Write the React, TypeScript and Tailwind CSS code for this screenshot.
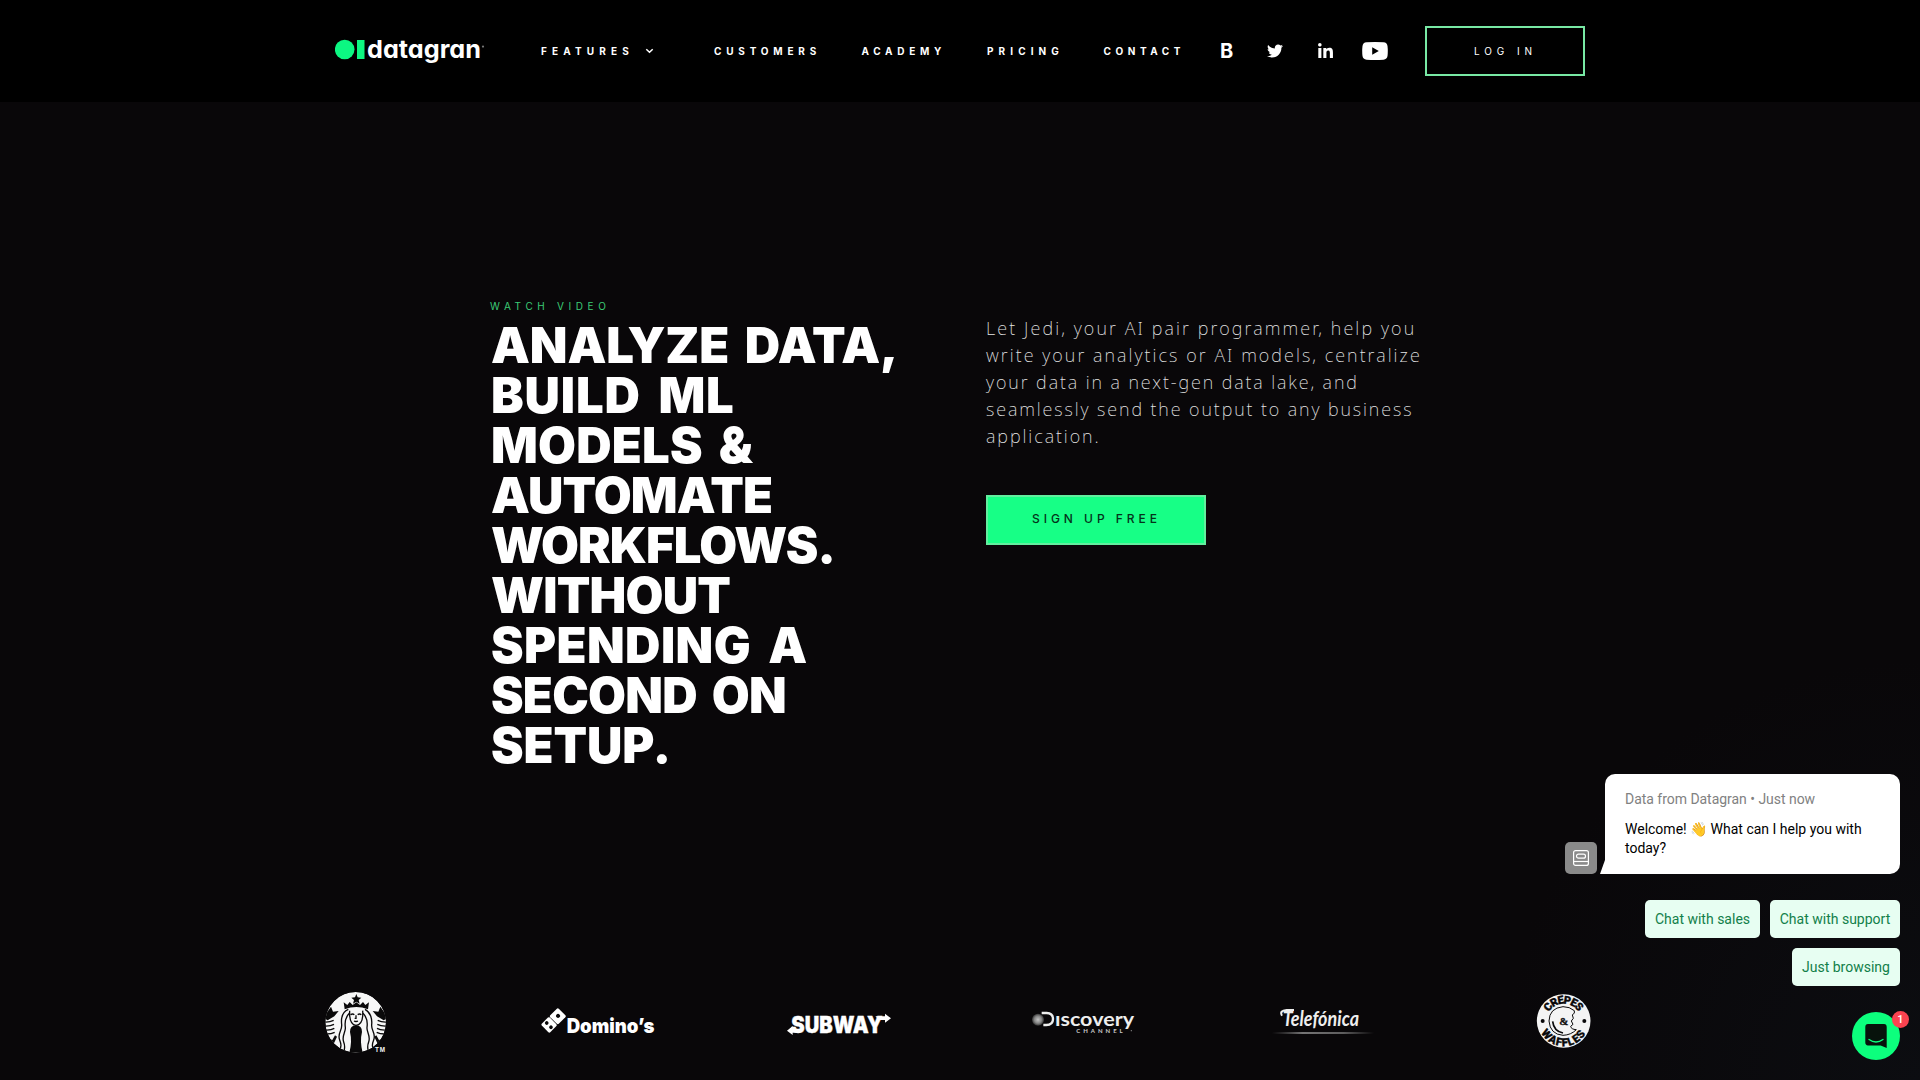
import React from 'react';
import { FaTwitter, FaLinkedinIn } from 'react-icons/fa';

function DatagranLogo() {
  return (
    <svg className="h-10 w-[150px] shrink-0" viewBox="0 -5 150 40">
      <circle cx="9.7" cy="13.5" r="9.8" fill="#0cf782" />
      <rect x="22" y="4" width="7.5" height="19" fill="#0cf782" />
      <text
        x="32"
        y="22.3"
        textLength="114"
        lengthAdjust="spacingAndGlyphs"
        className="fill-white font-['Inter',sans-serif] text-[24.5px] font-bold [font-feature-settings:'cv11','ss03']"
      >
        datagran
      </text>
      <circle cx="148" cy="10.6" r="1.1" fill="#777" />
    </svg>
  );
}

function Header() {
  return (
    <header className="flex h-[102px] items-center bg-black pl-[335px] font-['Inter',sans-serif] text-[10px] font-bold whitespace-nowrap text-white">
      <DatagranLogo />
      <nav className="flex items-center">
        <a className="ml-14 w-[104px] tracking-[5.16px]">FEATURES</a>
        <svg className="h-[9px] w-[9px]" viewBox="0 0 9 9" fill="none" stroke="white" strokeWidth="1.5">
          <path d="M1.3 2.2 4.5 5.3 7.7 2.2" />
        </svg>
        <a className="ml-[60px] w-[147.500px] tracking-[4.8px]">CUSTOMERS</a>
        <a className="w-[125.500px] tracking-[4.7px]">ACADEMY</a>
        <a className="w-[116.500px] tracking-[5.1px]">PRICING</a>
        <a className="w-[116.500px] tracking-[4.56px]">CONTACT</a>
      </nav>
      <span className="w-[14px] text-[20px] leading-5 font-bold">B</span>
      <FaTwitter className="ml-[33px] h-4 w-4" />
      <FaLinkedinIn className="ml-[34px] h-[17px] w-[17px]" />
      <svg className="ml-7 h-[18px] w-[26px]" viewBox="0 0 26 18">
        <path
          fill="white"
          fillRule="evenodd"
          d="M4.5.3Q13-.3 21.500.3 25 .6 25.500 4 26.100 9 25.500 14 25 17.400 21.500 17.700 13 18.300 4.500 17.700 1 17.400.5 14-.1 9 .5 4 1 .6 4.500.3ZM10.200 5.300V12.700L16.800 9Z"
        />
      </svg>
      <a className="ml-[37px] flex h-[50px] w-[160px] items-center justify-center border-2 border-[#78e8a4] pt-px pl-[1px] font-normal tracking-[4.94px]">
        LOG IN
      </a>
    </header>
  );
}

function Hero() {
  return (
    <main className="flex h-[878px] pl-[490px]">
      <section className="w-[496px] pt-[197px] font-['Inter',sans-serif]">
        <p className="h-[22px] text-[10px] leading-[15px] tracking-[4.64px] text-[#3ccb76]">WATCH VIDEO</p>
        <h1 className="pl-[1px] text-[49px] leading-[50px] font-black whitespace-nowrap text-white">
          <span className="block tracking-[-0.1px] [word-spacing:6px]">ANALYZE DATA,</span>
          <span className="block tracking-[0.86px] [word-spacing:7px]">BUILD ML</span>
          <span className="block tracking-[0.2px] [word-spacing:6px]">MODELS &amp;</span>
          <span className="block tracking-[-0.9px]">AUTOMATE</span>
          <span className="block tracking-[-0.9px]">WORKFLOWS.</span>
          <span className="block tracking-[-0.8px]">WITHOUT</span>
          <span className="block tracking-[0.4px] [word-spacing:7px]">SPENDING A</span>
          <span className="block tracking-[-0.76px] [word-spacing:6px]">SECOND ON</span>
          <span className="block tracking-[-0.1px]">SETUP.</span>
        </h1>
      </section>
      <section className="pt-[213px]">
        <p className="font-['Noto_Sans',sans-serif] text-[18px] leading-[27px] font-extralight whitespace-nowrap text-[#e6e6e6]">
          <span className="block tracking-[2.12px]">Let Jedi, your AI pair programmer, help you</span>
          <span className="block tracking-[2.06px]">write your analytics or AI models, centralize</span>
          <span className="block tracking-[1.92px]">your data in a next-gen data lake, and</span>
          <span className="block tracking-[1.91px]">seamlessly send the output to any business</span>
          <span className="block tracking-[1.95px]">application.</span>
        </p>
        <a className="mt-[45px] flex h-[50px] w-[220px] items-center border-2 border-[#62ee9e] bg-[#17ff86] pb-[2px] pl-[44px] font-['Inter',sans-serif] text-[12px] font-medium tracking-[3.96px] whitespace-nowrap text-[#04331a]">
          SIGN UP FREE
        </a>
      </section>
    </main>
  );
}

function Starbucks() {
  return (
    <svg className="h-20 w-20" viewBox="0 0 240 240" fill="#f7f7f7">
      <clipPath id="siren">
        <circle cx="122" cy="127" r="91" />
      </clipPath>
      <g clipPath="url(#siren)">
        <circle cx="122" cy="127" r="91" />
        <g fill="#0a090a">
          <path d="m124 42 4 10 11 1-8 7 3 11-10-6-10 6 3-11-8-7 11-1Z" />
          <path d="m86 67 11 8 7-9 9 9 11-8 11 8 9-9 7 9 11-8-3 21q-35-14-70 0Z" />
          <path d="m33 101 15-21 6 15 17-2-13 16-20 12-10-6Zm178 0-15-21-6 15-17-2 13 16 20 12 10-6Z" />
          <path d="M123 136q18 0 18 20-7 28 2 62h-40q9-34 2-62 0-20 18-20Z" />
          <path d="M30 172l22 8 8-14 6 4-14 30-24-12Zm184 0-22 8-8-14-6 4 14 30 24-12Z" />
        </g>
        <g stroke="#0a090a" strokeWidth="4" fill="none">
          <path d="M28 126q16 1 28-5M28 138q18 1 29-5M30 150q18 1 28-5M34 162q16 0 25-5M216 126q-16 1-28-5M216 138q-18 1-29-5M214 150q-18 1-28-5M210 162q-16 0-25-5" />
          <path
            d="M100 88c-20 8-22 28-20 46s-14 26-6 46 2 22-4 42M103 100c-14 14-14 28-12 42s-12 26-5 44 2 20-2 36M150 88c16 8 22 28 20 46s14 26 6 46-2 22 4 42M144 100c14 14 14 28 12 42s12 26 5 44-2 20 2 36"
            strokeWidth="4"
          />
          <path
            d="M104 92q-2 42 19 44 23-2 20-44M107 104q6-4 11 0M128 104q6-4 11 0M117 123q6 3 12 0M123 106v9h-4"
            strokeWidth="4"
          />
        </g>
      </g>
      <text x="180" y="217" textLength="30" className="font-['Liberation_Sans',sans-serif] text-[19px] font-bold">
        TM
      </text>
    </svg>
  );
}

function Dominos() {
  return (
    <svg className="ml-[145px] h-20 w-[120px]" viewBox="690 0 360 240" fill="white">
      <g transform="rotate(-45 730 122)">
        <rect x="695" y="104" width="34" height="36" rx="4" />
        <rect x="731" y="104" width="36" height="36" rx="4" />
        <g fill="#0a090a">
          <circle cx="711" cy="113" r="5.500" />
          <circle cx="711" cy="131" r="5.500" />
          <circle cx="750" cy="122" r="6" />
        </g>
      </g>
      <text
        x="770"
        y="160"
        textLength="263"
        lengthAdjust="spacingAndGlyphs"
        className="font-['Inter',sans-serif] text-[61px] font-black"
      >
        Domino’s
      </text>
    </svg>
  );
}

function Subway() {
  return (
    <svg className="ml-[125px] h-20 w-[110px]" viewBox="45 -30 330 240" fill="white">
      <text
        x="64"
        y="128"
        textLength="274"
        lengthAdjust="spacingAndGlyphs"
        stroke="white"
        strokeWidth="1"
        className="font-['Inter',sans-serif] text-[67px] font-black"
      >
        SUBWAY
      </text>
      <path d="M94 116H68v-8l-17 14 17 13v-7h22ZM316 79h29v-8l18 14-18 13v-8h-18Z" />
    </svg>
  );
}

function Discovery() {
  return (
    <svg className="ml-[135px] h-20 w-[110px]" viewBox="780 -30 330 240" fill="#eee">
      <radialGradient id="globe">
        <stop offset="0" stopColor="#c4c4c4" />
        <stop offset="0.6" stopColor="#858585" />
        <stop offset="1" stopColor="#333" />
      </radialGradient>
      <circle cx="804" cy="89" r="18" fill="url(#globe)" />
      <path d="M815 69h15q19 1 19 18 0 18-20 18h-9" fill="none" stroke="#eee" strokeWidth="7" />
      <text
        x="855"
        y="108"
        textLength="237"
        lengthAdjust="spacingAndGlyphs"
        className="font-['Lato',sans-serif] text-[56px] font-bold"
      >
        ıscovery
      </text>
      <text x="919" y="130" textLength="139" className="font-['Lato',sans-serif] text-[18px] font-bold" fill="#ccc">
        CHANNEL
      </text>
      <circle cx="1084" cy="122" r="2" fill="#888" />
    </svg>
  );
}

function Telefonica() {
  return (
    <svg className="ml-[130px] h-20 w-[105px]" viewBox="60 0 315 240" fill="#eee">
      <linearGradient id="rule">
        <stop offset="0" stopColor="#888" stopOpacity="0" />
        <stop offset="0.3" stopColor="#aaa" />
        <stop offset="0.7" stopColor="#888" />
        <stop offset="1" stopColor="#888" stopOpacity="0" />
      </linearGradient>
      <text
        x="98"
        y="137"
        textLength="229"
        lengthAdjust="spacingAndGlyphs"
        className="font-['Lato',sans-serif] text-[64px] font-bold italic"
      >
        Telefónica
      </text>
      <path d="M96 107q-9-15 14-17h22" fill="none" stroke="#eee" strokeWidth="6" />
      <rect x="66" y="157" width="306" height="4" fill="url(#rule)" />
    </svg>
  );
}

function CrepesWaffles() {
  return (
    <svg className="ml-[158px] h-20 w-[60px]" viewBox="850 0 180 240" fill="#0a090a">
      <circle cx="942" cy="123" r="80.500" fill="#f4f4f4" />
      <path id="top-arc" d="M890 123a52 52 0 0 1 104 0" fill="none" />
      <path id="bottom-arc" d="M866 123a76 76 0 0 0 152 0" fill="none" />
      <g className="font-['Roboto',sans-serif] text-[33px] font-black" stroke="#0a090a" strokeWidth="1">
        <text>
          <textPath href="#top-arc" startOffset="49%" textAnchor="middle" className="tracking-[-3px]">
            CREPES
          </textPath>
        </text>
        <text>
          <textPath href="#bottom-arc" startOffset="50%" textAnchor="middle" className="tracking-[3px]">
            WAFFLES
          </textPath>
        </text>
      </g>
      <path
        d="M974 92q-14-12-34-12-41 4-42 43 3 40 42 43 24-1 40-17-16-1-17-10l7-6-5-10 6-8-3-10 6-6Z"
        fill="none"
        stroke="#0a090a"
        strokeWidth="3"
      />
      <path d="M909 124q3 29 31 35" fill="none" stroke="#0a090a" strokeWidth="5" />
      <text x="929" y="134" className="font-['Liberation_Serif',serif] text-[33px] font-bold" stroke="#0a090a">
        &amp;
      </text>
      <circle cx="879" cy="123" r="6" />
      <circle cx="1004" cy="123" r="6" />
    </svg>
  );
}

function Messenger() {
  return (
    <aside className="absolute right-5 bottom-5 flex w-[340px] flex-col items-end font-['Roboto',sans-serif] text-[14px] whitespace-nowrap">
      <div className="flex items-end">
        <div className="mr-[3px] flex h-8 w-8 items-center justify-center rounded-[5px] bg-[#8a8a8a]">
          <svg className="h-4 w-4" viewBox="0 0 16 16" fill="none" stroke="white" strokeWidth="1.200">
            <rect x=".6" y=".6" width="14.800" height="14.800" rx="2" />
            <rect x="3.500" y="4.200" width="9" height="4" rx="2" />
            <path d="M.6 11.500h14.800" />
          </svg>
        </div>
        <svg className="h-[14px] w-[5px]" viewBox="0 0 5 14">
          <path d="M5 0v14H0Z" fill="white" />
        </svg>
        <div className="h-[100px] w-[295px] rounded-[10px] rounded-bl-none bg-white px-5 pt-[15px] leading-5">
          <p className="tracking-[-0.03px] text-[#818181]">Data from Datagran • Just now</p>
          <p className="mt-[11px] leading-[19px] text-black">
            Welcome! 👋 What can I help you with
            <br />
            today?
          </p>
        </div>
      </div>
      <div className="mt-[26px] flex flex-wrap justify-end gap-[10px] text-[#12804a]">
        <button className="h-[38px] w-[115px] rounded-[5px] bg-[#e7fef2]">Chat with sales</button>
        <button className="h-[38px] w-[130px] rounded-[5px] bg-[#e7fef2]">Chat with support</button>
        <button className="h-[38px] w-[108px] rounded-[5px] bg-[#e7fef2]">Just browsing</button>
      </div>
      <div className="relative mt-[26px] flex h-12 w-12 items-center justify-center rounded-full bg-[#0cff7d]">
        <svg className="h-6 w-[22px]" viewBox="0 0 22 24">
          <path d="M3 0h16q2.700 0 2.700 3v21l-6-2.600H3Q.3 21.400.3 18.600V3Q.3 0 3 0Z" fill="#07130c" />
          <path d="M4 15.500q7 5 14 0" fill="none" stroke="#0cff7d" strokeWidth="1.300" strokeLinecap="round" />
        </svg>
        <span className="absolute -top-px -right-[9px] flex h-[17px] w-[17px] items-center justify-center rounded-full bg-[#fa4350] text-[11px] leading-none font-medium text-white">
          1
        </span>
      </div>
    </aside>
  );
}

export default function App() {
  return (
    <div className="relative h-[1080px] w-[1920px] overflow-hidden bg-[#090709] bg-[radial-gradient(circle_at_bottom_right,#0c0d11_0px,#090709_420px)]">
      <Header />
      <Hero />
      <div className="flex pl-[315px]">
        <Starbucks />
        <Dominos />
        <Subway />
        <Discovery />
        <Telefonica />
        <CrepesWaffles />
      </div>
      <Messenger />
    </div>
  );
}
